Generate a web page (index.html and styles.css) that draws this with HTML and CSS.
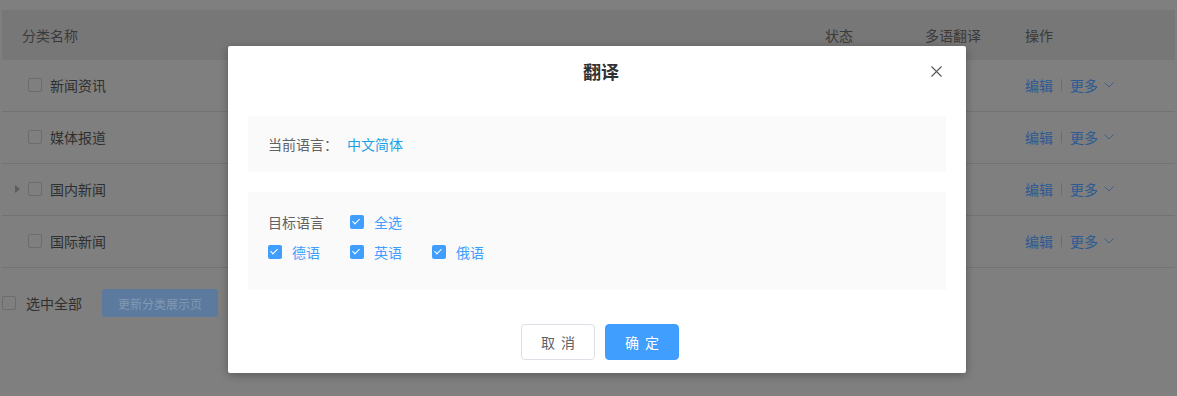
FILE: index.html
```html
<!DOCTYPE html>
<html lang="zh-CN">

<head>
    <meta charset="UTF-8">
    <meta name="viewport" content="width=device-width, initial-scale=1.0">
    <title>分类管理</title>
    <link rel="stylesheet" href="styles.css">
</head>

<body>
    <div class="page">
        <div class="table">
            <div class="row head">
                <div class="cell name">分类名称</div>
                <div class="cell">状态</div>
                <div class="cell">多语翻译</div>
                <div class="cell">操作</div>
            </div>
            <div class="row">
                <div class="cell name"><span class="expand"></span><span class="box"></span>新闻资讯</div>
                <div class="cell"></div>
                <div class="cell"></div>
                <div class="cell ops"><a>编辑</a><i class="bar"></i><a>更多</a><svg class="chev" width="10" height="6" viewBox="0 0 10 6"><path d="M0.5 0.5 L5 5 L9.5 0.5" fill="none" stroke="currentColor" stroke-width="1"/></svg></div>
            </div>
            <div class="row">
                <div class="cell name"><span class="expand"></span><span class="box"></span>媒体报道</div>
                <div class="cell"></div>
                <div class="cell"></div>
                <div class="cell ops"><a>编辑</a><i class="bar"></i><a>更多</a><svg class="chev" width="10" height="6" viewBox="0 0 10 6"><path d="M0.5 0.5 L5 5 L9.5 0.5" fill="none" stroke="currentColor" stroke-width="1"/></svg></div>
            </div>
            <div class="row">
                <div class="cell name"><span class="expand caret"></span><span class="box"></span>国内新闻</div>
                <div class="cell"></div>
                <div class="cell"></div>
                <div class="cell ops"><a>编辑</a><i class="bar"></i><a>更多</a><svg class="chev" width="10" height="6" viewBox="0 0 10 6"><path d="M0.5 0.5 L5 5 L9.5 0.5" fill="none" stroke="currentColor" stroke-width="1"/></svg></div>
            </div>
            <div class="row">
                <div class="cell name"><span class="expand"></span><span class="box"></span>国际新闻</div>
                <div class="cell"></div>
                <div class="cell"></div>
                <div class="cell ops"><a>编辑</a><i class="bar"></i><a>更多</a><svg class="chev" width="10" height="6" viewBox="0 0 10 6"><path d="M0.5 0.5 L5 5 L9.5 0.5" fill="none" stroke="currentColor" stroke-width="1"/></svg></div>
            </div>
        </div>

        <div class="footer">
            <span class="box"></span>
            <span class="all-label">选中全部</span>
            <button class="update-btn">更新分类展示页</button>
        </div>
    </div>

    <div class="dialog">
        <div class="dialog-header">
            <span class="dialog-title">翻译</span>
            <svg class="close" width="11" height="11" viewBox="0 0 11 11"><path d="M0.5 0.5 L10.5 10.5 M10.5 0.5 L0.5 10.5" stroke="#555" stroke-width="1.1"/></svg>
        </div>
        <div class="dialog-body">
            <div class="panel current">
                <span class="label">当前语言：</span><span class="lang">中文简体</span>
            </div>
            <div class="panel target">
                <div class="line">
                    <span class="label item">目标语言</span>
                    <label class="item"><span class="check"></span>全选</label>
                </div>
                <div class="line">
                    <label class="item"><span class="check"></span>德语</label>
                    <label class="item"><span class="check"></span>英语</label>
                    <label class="item"><span class="check"></span>俄语</label>
                </div>
            </div>
        </div>
        <div class="dialog-footer">
            <button class="btn">取 消</button>
            <button class="btn primary">确 定</button>
        </div>
    </div>
</body>

</html>
```

FILE: styles.css
```css
body {
    margin: 0;
    background-color: #7f7f7f;
    font-family: "Noto Sans CJK SC", "Microsoft YaHei", sans-serif;
    font-size: 14px;
    color: #333;
}

.page {
    padding: 10px 2px;
}

.row {
    display: grid;
    grid-template-columns: 1fr 100px 100px 150px;
    height: 51px;
    border-bottom: 1px solid #727272;
    align-items: center;
    color: #2f2f2f;
}

.row.head {
    height: 50px;
    border-bottom: none;
    background-color: #777;
    color: #3a3a3a;
}

.cell {
    display: flex;
    align-items: center;
    line-height: 20px;
    margin-top: -1px;
}

.row .name {
    padding-left: 13px;
}

.head .cell.name {
    padding-left: 20px;
}

.expand {
    width: 5px;
    height: 8px;
    margin-right: 8px;
}

.caret {
    box-sizing: border-box;
    border-left: 5px solid #5d5d5d;
    border-top: 4px solid transparent;
    border-bottom: 4px solid transparent;
}

.box {
    box-sizing: border-box;
    width: 14px;
    height: 14px;
    border: 1px solid #6c6c6c;
    border-radius: 2px;
    margin-right: 8px;
}

.ops a {
    color: #2c5a92;
}

.bar {
    width: 1px;
    height: 12px;
    background-color: #6c6c6c;
    margin: 0 8px;
}

.chev {
    color: #3f5f8d;
    margin-left: 6px;
}

.footer {
    display: flex;
    align-items: center;
    margin-top: 21px;
    height: 28px;
}

.footer .box {
    margin-right: 10px;
}

.all-label {
    color: #2f2f2f;
    margin-right: 20px;
}

.update-btn {
    height: 28px;
    padding: 0 16px;
    border: none;
    border-radius: 3px;
    background-color: #5b7a9e;
    color: #8199b4;
    font-family: inherit;
    font-size: 12px;
}

/* dialog */

.dialog {
    position: absolute;
    left: 228px;
    top: 46px;
    width: 738px;
    background-color: #fff;
    border-radius: 2px;
    box-shadow: 0 2px 10px rgba(0, 0, 0, 0.3);
}

.dialog-header {
    position: relative;
    padding: 13px 20px 0 28px;
    height: 25px;
    text-align: center;
}

.dialog-title {
    font-size: 18px;
    font-weight: bold;
    line-height: 24px;
    color: #303133;
}

.close {
    position: absolute;
    top: 20px;
    right: 24px;
}

.dialog-body {
    padding: 32px 20px 0;
}

.panel {
    background-color: #fafafa;
    padding: 0 20px;
}

.label {
    color: #606266;
}

.current {
    height: 56px;
    display: flex;
    align-items: center;
    margin-bottom: 20px;
}

.lang {
    color: #1aa1e8;
    margin-left: 9px;
}

.target {
    padding-top: 20px;
    padding-bottom: 28px;
}

.line {
    display: flex;
    align-items: center;
    height: 20px;
}

.line + .line {
    margin-top: 10px;
}

.item {
    display: flex;
    align-items: center;
    width: 82px;
    line-height: 20px;
}

label.item {
    color: #409eff;
}

.check {
    position: relative;
    width: 14px;
    height: 14px;
    border-radius: 2px;
    background-color: #409eff;
    margin-right: 10px;
}

.check::after {
    content: "";
    position: absolute;
    left: 4px;
    top: 2px;
    width: 3px;
    height: 6px;
    border: 1px solid #fff;
    border-left: 0;
    border-top: 0;
    transform: rotate(45deg);
}

.dialog-footer {
    display: flex;
    justify-content: center;
    gap: 10px;
    padding: 34px 0 13px 6px;
}

.btn {
    box-sizing: border-box;
    width: 74px;
    height: 36px;
    border: 1px solid #dcdfe6;
    border-radius: 4px;
    background-color: #fff;
    color: #606266;
    font-family: inherit;
    font-size: 14px;
    word-spacing: 3px;
}

.btn.primary {
    border-color: #409eff;
    background-color: #409eff;
    color: #fff;
}
```
